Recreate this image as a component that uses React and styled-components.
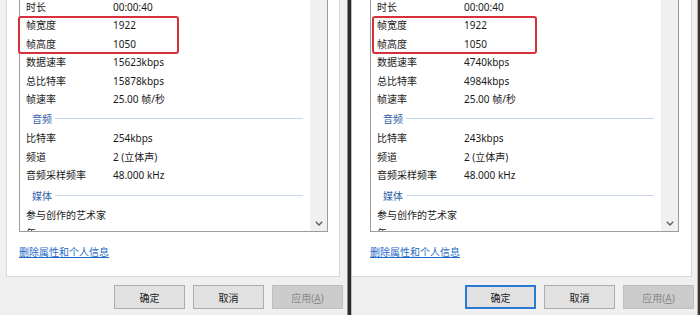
import React from "react";
import styled, { createGlobalStyle } from "styled-components";

const GlobalStyle = createGlobalStyle`
  html, body {
    margin: 0;
    padding: 0;
    background: #f0f0f0;
  }
  body {
    font-family: "Noto Sans", "Noto Sans CJK SC", sans-serif;
    font-size: 10px;
    color: #1a1a1a;
  }
`;

const leftData = {
  dataRate: "15623kbps",
  totalRate: "15878kbps",
  audioRate: "254kbps",
};

const rightData = {
  dataRate: "4740kbps",
  totalRate: "4984kbps",
  audioRate: "243kbps",
};

function buildRows(d) {
  return [
    { label: "时长", value: "00:00:40" },
    { label: "帧宽度", value: "1922" },
    { label: "帧高度", value: "1050" },
    { label: "数据速率", value: d.dataRate },
    { label: "总比特率", value: d.totalRate },
    { label: "帧速率", value: "25.00 帧/秒" },
    { section: "音频" },
    { label: "比特率", value: d.audioRate },
    { label: "频道", value: "2 (立体声)" },
    { label: "音频采样频率", value: "48.000 kHz" },
    { section: "媒体" },
    { label: "参与创作的艺术家", value: "" },
    { label: "年", value: "" },
  ];
}

function Chevron() {
  return (
    <svg width="8" height="5" viewBox="0 0 8 5">
      <path d="M0.8 0.8 L4 4 L7.2 0.8" fill="none" stroke="#5a5a5a" strokeWidth="1.3" />
    </svg>
  );
}

function Pane({ data, layout }) {
  const rows = buildRows(data);
  return (
    <PaneBox $width={layout.width}>
      <Panel $left={layout.panelLeft} $width={layout.panelWidth} $edge={layout.panelEdge}>
        <List $left={layout.listLeft}>
          <Content>
            {rows.map((r, i) =>
              r.section ? (
                <Section key={i}>
                  <span>{r.section}</span>
                  <Rule />
                </Section>
              ) : (
                <Row key={i}>
                  <Label>{r.label}</Label>
                  <Value>{r.value}</Value>
                </Row>
              )
            )}
          </Content>
          <Scrollbar>
            <Chevron />
          </Scrollbar>
        </List>
        <Link $left={layout.listLeft}>删除属性和个人信息</Link>
      </Panel>
      <Buttons $right={layout.buttonsRight}>
        <Button $focused={layout.focused}>确定</Button>
        <Button>取消</Button>
        <Button disabled>
          应用(<u>A</u>)
        </Button>
      </Buttons>
      <Highlight style={{ left: layout.markLeft, width: layout.markWidth }} />
    </PaneBox>
  );
}

export default function App() {
  return (
    <>
      <GlobalStyle />
      <Screen>
        <Pane
          data={leftData}
          layout={{
            width: 347,
            panelLeft: 6,
            panelWidth: 334,
            panelEdge: true,
            listLeft: 12,
            buttonsRight: 4,
            focused: false,
            markLeft: 18,
            markWidth: 161,
          }}
        />
        <Divider />
        <Pane
          data={rightData}
          layout={{
            width: 345,
            panelLeft: 0,
            panelWidth: 340,
            panelEdge: false,
            listLeft: 18,
            buttonsRight: 3,
            focused: true,
            markLeft: 20,
            markWidth: 165,
          }}
        />
        <Edge />
      </Screen>
    </>
  );
}

const Screen = styled.div`
  display: flex;
  width: 700px;
  height: 315px;
  overflow: hidden;
  background: #f0f0f0;
`;

const PaneBox = styled.div`
  position: relative;
  flex: 0 0 ${(p) => p.$width}px;
  display: flex;
  flex-direction: column;
  overflow: hidden;
`;

const Panel = styled.div`
  box-sizing: border-box;
  margin-left: ${(p) => p.$left}px;
  width: ${(p) => p.$width}px;
  height: 277px;
  background: #ffffff;
  border: 1px solid #d9d9d9;
  border-top: none;
  border-left: ${(p) => (p.$edge ? "1px solid #d9d9d9" : "none")};
`;

const List = styled.div`
  box-sizing: border-box;
  display: flex;
  margin-left: ${(p) => p.$left}px;
  width: 309px;
  height: 232px;
  border: 1px solid #9c9c9c;
  border-top: none;
  background: #ffffff;
`;

const Content = styled.div`
  flex: 1;
  overflow: hidden;
  padding-top: 0;
  margin-top: -2px;
`;

const Row = styled.div`
  display: flex;
  height: 18.4px;
  line-height: 18.4px;
  padding-left: 6px;
  white-space: nowrap;
`;

const Label = styled.span`
  flex: 0 0 87px;
`;

const Value = styled.span`
  flex: 1;
`;

const Section = styled.div`
  display: flex;
  align-items: center;
  height: 21px;
  padding-left: 12px;
  padding-right: 7px;
  color: #2f5ea8;

  span {
    white-space: nowrap;
  }
`;

const Rule = styled.div`
  flex: 1;
  height: 1px;
  margin-left: 3px;
  background: #c8d5e8;
`;

const Scrollbar = styled.div`
  flex: 0 0 17px;
  display: flex;
  align-items: flex-end;
  justify-content: center;
  padding-bottom: 5px;
  box-sizing: border-box;
  background: #f0f0f0;
`;

const Link = styled.a`
  display: inline-block;
  margin-left: ${(p) => p.$left}px;
  margin-top: 14px;
  line-height: 12px;
  color: #1e6ac8;
  text-decoration: underline;
  cursor: pointer;
`;

const Buttons = styled.div`
  display: flex;
  justify-content: flex-end;
  gap: 8px;
  margin-top: 8px;
  padding-right: ${(p) => p.$right}px;
`;

const Button = styled.button`
  box-sizing: border-box;
  width: 71px;
  height: 24px;
  padding: 0;
  font-family: "Noto Sans", "Noto Sans CJK SC", sans-serif;
  font-size: 10px;
  color: #1a1a1a;
  background: #e1e1e1;
  border: 1px solid ${(p) => (p.$focused ? "#2a7ad2" : "#adadad")};
  box-shadow: ${(p) => (p.$focused ? "inset 0 0 0 1px #2a7ad2" : "none")};

  &:disabled {
    background: #cccccc;
    border-color: #bfbfbf;
    color: #8a8a8a;
  }
`;

const Highlight = styled.div`
  position: absolute;
  top: 16px;
  height: 38px;
  box-sizing: border-box;
  border: 2px solid #d6303a;
  border-radius: 3px;
  pointer-events: none;
`;

const Divider = styled.div`
  flex: 0 0 5px;
  background: linear-gradient(
    to right,
    #8c8c8c 0 1px,
    #2e2a26 1px 4px,
    #bdbdbd 4px 5px
  );
`;

const Edge = styled.div`
  flex: 0 0 3px;
  background: linear-gradient(to right, #b0b0b0 0 1px, #3a3430 1px 3px);
`;
